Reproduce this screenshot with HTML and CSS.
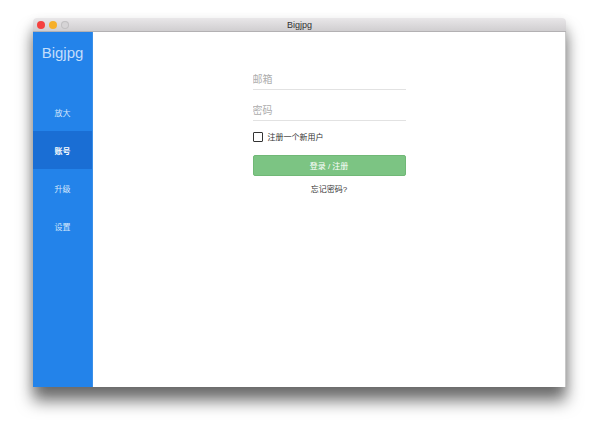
FILE: index.html
```html
<!DOCTYPE html>
<html lang="zh-CN">
<head>
    <meta charset="UTF-8">
    <meta name="viewport" content="width=device-width, initial-scale=1.0">
    <title>Bigjpg</title>
    <link rel="stylesheet" href="styles.css">
</head>
<body>

    <div class="window">
        <div class="titlebar">
            <div class="lights">
                <span class="light red"></span>
                <span class="light yellow"></span>
                <span class="light gray"></span>
            </div>
            <div class="title">Bigjpg</div>
        </div>

        <div class="app">
            <div class="sidebar">
                <div class="logo">Bigjpg</div>
                <ul class="menu">
                    <li>放大</li>
                    <li class="active">账号</li>
                    <li>升级</li>
                    <li>设置</li>
                </ul>
            </div>

            <div class="main">
                <form class="login">
                    <input class="field" type="text" placeholder="邮箱">
                    <input class="field" type="password" placeholder="密码">
                    <label class="check">
                        <span class="box"></span>
                        注册一个新用户
                    </label>
                    <button class="submit" type="button">登录 / 注册</button>
                    <div class="forgot">忘记密码?</div>
                </form>
            </div>
        </div>
    </div>

</body>
</html>
```

FILE: styles.css
```css
body {
    margin: 0;
    padding: 18px 0 48px 33px;
    background-color: #fff;
    font-family: "Liberation Sans", "Noto Sans CJK SC", sans-serif;
}
.window {
    width: 533px;
    height: 369px;
    display: flex;
    flex-direction: column;
    border-radius: 4px 4px 0 0;
    box-shadow: 0 14px 16px rgba(0, 0, 0, 0.55), 0 4px 12px rgba(0, 0, 0, 0.12);
    overflow: hidden;
}
.titlebar {
    position: relative;
    height: 13px;
    background: linear-gradient(#e9e7e9, #d0ced0);
    border-bottom: 1px solid #b3b1b3;
    text-align: center;
}
.title {
    font-size: 9px;
    line-height: 14px;
    color: #333;
}
.lights {
    position: absolute;
    left: 4px;
    top: 3px;
    display: flex;
    gap: 4px;
}
.light {
    width: 8px;
    height: 8px;
    border-radius: 50%;
}
.red {
    background-color: #f5413f;
}
.yellow {
    background-color: #f6b02a;
}
.gray {
    background-color: #d6d4d6;
    box-shadow: inset 0 0 0 1px #c2c0c2;
}
.app {
    flex: 1;
    display: flex;
}
.sidebar {
    width: 59px;
    background-color: #2383ea;
    border-right: 1px solid #3a8fe8;
}
.logo {
    height: 61px;
    line-height: 42px;
    text-align: center;
    font-size: 15px;
    color: #c3defb;
}
.menu {
    list-style: none;
    margin: 0;
    padding: 0;
}
.menu li {
    height: 38px;
    line-height: 41px;
    text-align: center;
    font-size: 8px;
    color: #d3e6fc;
}
.menu li.active {
    background-color: #1a6ed4;
    color: #fff;
    font-weight: bold;
}
.main {
    flex: 1;
    background-color: #fff;
    border-right: 1px solid #c8c8c8;
}
.login {
    width: 153px;
    margin: 37px auto 0;
    display: flex;
    flex-direction: column;
}
.field {
    height: 20px;
    margin: 0 0 10px;
    padding: 0;
    border: none;
    border-bottom: 1px solid #e2e2e2;
    font-family: inherit;
    font-size: 10px;
    color: #333;
    outline: none;
}
.field::placeholder {
    color: #adadad;
}
.check {
    display: flex;
    align-items: center;
    gap: 5px;
    font-size: 8px;
    color: #333;
}
.box {
    width: 8px;
    height: 8px;
    border: 1.5px solid #333;
    border-radius: 1px;
}
.submit {
    margin-top: 13px;
    height: 21px;
    border: 1px solid #70b876;
    border-radius: 2px;
    background-color: #7cc483;
    color: #fff;
    font-family: inherit;
    font-size: 8px;
}
.forgot {
    margin-top: 7px;
    text-align: center;
    font-size: 8px;
    color: #333;
}
```
